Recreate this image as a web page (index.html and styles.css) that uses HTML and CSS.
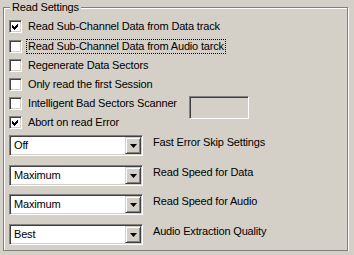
FILE: index.html
```html
<!DOCTYPE html>
<html lang="en">
<head>
    <meta charset="UTF-8">
    <title>Read Settings</title>
    <link rel="stylesheet" href="styles.css">
</head>
<body>
    <div class="group">
        <span class="legend">Read Settings</span>

        <div class="checks">
            <div class="row">
                <span class="box checked"><svg viewBox="0 0 9 9" width="9" height="9"><path d="M1 3 L3 5 L7 1 L7 4 L3 8 L1 6 Z" fill="#000"/></svg></span>
                <span class="text">Read Sub-Channel Data from Data track</span>
            </div>
            <div class="row">
                <span class="box"></span>
                <span class="text focus">Read Sub-Channel Data from Audio tarck</span>
            </div>
            <div class="row">
                <span class="box"></span>
                <span class="text">Regenerate Data Sectors</span>
            </div>
            <div class="row">
                <span class="box"></span>
                <span class="text">Only read the first Session</span>
            </div>
            <div class="row">
                <span class="box"></span>
                <span class="text wide">Intelligent Bad Sectors Scanner</span>
                <span class="edit"></span>
            </div>
            <div class="row">
                <span class="box checked"><svg viewBox="0 0 9 9" width="9" height="9"><path d="M1 3 L3 5 L7 1 L7 4 L3 8 L1 6 Z" fill="#000"/></svg></span>
                <span class="text">Abort on read Error</span>
            </div>
        </div>

        <div class="combos">
            <div class="combo-row">
                <div class="combo"><span class="value">Off</span><span class="drop"><svg viewBox="0 0 7 4" width="7" height="4"><path d="M0 0 H7 L3.5 4 Z" fill="#000"/></svg></span></div>
                <span class="label">Fast Error Skip Settings</span>
            </div>
            <div class="combo-row">
                <div class="combo"><span class="value">Maximum</span><span class="drop"><svg viewBox="0 0 7 4" width="7" height="4"><path d="M0 0 H7 L3.5 4 Z" fill="#000"/></svg></span></div>
                <span class="label">Read Speed for Data</span>
            </div>
            <div class="combo-row">
                <div class="combo"><span class="value">Maximum</span><span class="drop"><svg viewBox="0 0 7 4" width="7" height="4"><path d="M0 0 H7 L3.5 4 Z" fill="#000"/></svg></span></div>
                <span class="label">Read Speed for Audio</span>
            </div>
            <div class="combo-row">
                <div class="combo"><span class="value">Best</span><span class="drop"><svg viewBox="0 0 7 4" width="7" height="4"><path d="M0 0 H7 L3.5 4 Z" fill="#000"/></svg></span></div>
                <span class="label">Audio Extraction Quality</span>
            </div>
        </div>
    </div>
</body>
</html>
```

FILE: styles.css
```css
body {
    margin: 0;
    background: #d4d0c8;
    font-family: "Liberation Sans", Arial, sans-serif;
    font-size: 11px;
    letter-spacing: -0.17px;
    color: #000;
}
.group {
    position: relative;
    box-sizing: border-box;
    margin: 7px 0 0 3px;
    width: 345px;
    height: 244px;
    padding: 9px 0 0 5px;
    border: 1px solid #808080;
    box-shadow: inset 1px 1px #fff, 1px 1px #fff;
}
.legend {
    position: absolute;
    left: 6px;
    top: -8px;
    height: 14px;
    line-height: 14px;
    padding: 0 2px;
    background: #d4d0c8;
}
.row {
    display: flex;
    align-items: center;
    height: 19px;
}
.row:first-child {
    margin-bottom: 1px;
}
.box {
    box-sizing: border-box;
    width: 13px;
    height: 13px;
    flex: none;
    background: #fff;
    border: 1px solid;
    border-color: #808080 #fff #fff #808080;
    box-shadow: inset 1px 1px #404040, inset -1px -1px #d4d0c8;
    padding: 1px;
}
.box svg {
    display: block;
    shape-rendering: crispEdges;
}
.text {
    margin-left: 6px;
    line-height: 13px;
    white-space: nowrap;
}
.focus {
    margin-left: 4px;
    padding: 0 1px;
    border: 1px dotted #000;
}
.wide {
    width: 161px;
    flex: none;
}
.edit {
    box-sizing: border-box;
    align-self: flex-start;
    margin-top: 2px;
    width: 60px;
    height: 23px;
    flex: none;
    border: 1px solid;
    border-color: #808080 #fff #fff #808080;
    box-shadow: inset 1px 1px #404040, inset -1px -1px #d4d0c8;
}
.combos {
    display: flex;
    flex-direction: column;
    gap: 9px;
    margin-top: 3px;
}
.combo-row {
    display: flex;
    align-items: flex-start;
}
.combo-row:nth-child(3) {
    margin-top: -1px;
}
.combo {
    box-sizing: border-box;
    display: flex;
    align-items: center;
    width: 134px;
    height: 21px;
    padding: 1px;
    background: #fff;
    border: 1px solid;
    border-color: #808080 #fff #fff #808080;
    box-shadow: inset 1px 1px #404040, inset -1px -1px #d4d0c8;
}
.value {
    flex: 1;
    padding-left: 3px;
    line-height: 13px;
}
.drop {
    box-sizing: border-box;
    display: flex;
    align-items: center;
    justify-content: center;
    width: 16px;
    height: 17px;
    background: #d4d0c8;
    border: 1px solid;
    border-color: #d4d0c8 #404040 #404040 #d4d0c8;
    box-shadow: inset 1px 1px #fff, inset -1px -1px #808080;
}
.drop svg {
    display: block;
    margin-top: 1px;
}
.label {
    margin: 1px 0 0 10px;
    line-height: 13px;
    white-space: nowrap;
}
```
